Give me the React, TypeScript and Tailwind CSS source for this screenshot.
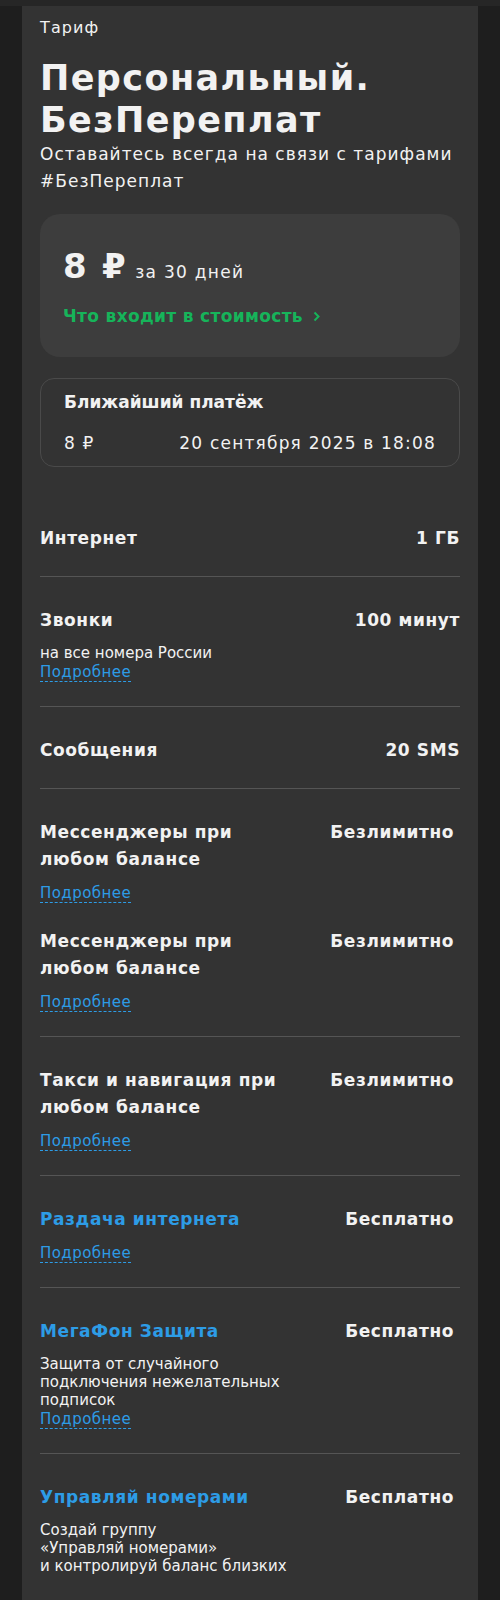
import React from 'react';

type Row = {
  title: string;
  value: string;
  blue?: boolean;
  desc?: React.ReactNode;
  more?: boolean;
  narrow?: boolean;
};

const More = () => (
  <div className="leading-[19px]">
    <span className="border-b border-dashed border-[#2d9ce6] text-[15px] tracking-[0.03em] text-[#2d9ce6]">
      Подробнее
    </span>
  </div>
);

const rows: Row[][] = [
  [{ title: 'Интернет', value: '1 ГБ' }],
  [{ title: 'Звонки', value: '100 минут', desc: 'на все номера России', more: true }],
  [{ title: 'Сообщения', value: '20 SMS' }],
  [
    { title: 'Мессенджеры при любом балансе', value: 'Безлимитно', more: true, narrow: true },
    { title: 'Мессенджеры при любом балансе', value: 'Безлимитно', more: true, narrow: true },
  ],
  [{ title: 'Такси и навигация при любом балансе', value: 'Безлимитно', more: true, narrow: true }],
  [{ title: 'Раздача интернета', value: 'Бесплатно', blue: true, more: true, narrow: true }],
  [
    {
      title: 'МегаФон Защита',
      value: 'Бесплатно',
      blue: true,
      narrow: true,
      more: true,
      desc: (
        <>
          Защита от случайного
          <br />
          подключения нежелательных
          <br />
          подписок
        </>
      ),
    },
  ],
  [
    {
      title: 'Управляй номерами',
      value: 'Бесплатно',
      blue: true,
      narrow: true,
      desc: (
        <>
          Создай группу
          <br />
          «Управляй номерами»
          <br />
          и контролируй баланс близких
        </>
      ),
    },
  ],
];

const Item = ({ row }: { row: Row }) => (
  <div>
    <div className="flex items-start justify-between text-[17px] font-bold leading-[27px] tracking-[0.035em]">
      <div className={`w-[250px] ${row.blue ? 'text-[#2d9ce6]' : 'text-[#f2f2f2]'}`}>{row.title}</div>
      <div className={row.narrow ? 'pr-[6px]' : ''}>{row.value}</div>
    </div>
    {row.desc && <div className="mt-[10px] text-[15px] leading-[18px]">{row.desc}</div>}
    {row.more && (
      <div className={row.desc ? '' : 'mt-[10px]'}>
        <More />
      </div>
    )}
  </div>
);

export default function App() {
  return (
    <div className="min-h-[1600px] w-full bg-[#1e1e1e] font-['DejaVu_Sans',sans-serif] text-[#f2f2f2]">
      <div className="h-[6px] bg-[#262626]" />
      <div className="mx-[22px] min-h-[1594px] bg-[#333333] px-[18px] pt-[10px]">
        <div className="text-[16px] leading-[24px] tracking-[0.07em]">Тариф</div>
        <h1 className="mt-[17px] text-[35px] font-bold leading-[42px] tracking-[0.04em]">
          Персональный.
          <br />
          БезПереплат
        </h1>
        <p className="text-[17px] leading-[27px] tracking-[0.06em]">
          Оставайтесь всегда на связи с тарифами
          <br />
          #БезПереплат
        </p>

        <div className="mt-[19px] rounded-[20px] bg-[#3d3d3d] px-[23px] pb-[29px] pt-[32px]">
          <div className="flex items-baseline gap-[8px]">
            <span className="text-[34px] font-bold leading-[40px] tracking-[0.05em]">8 ₽</span>
            <span className="text-[17px] tracking-[0.075em]">за 30 дней</span>
          </div>
          <div className="mt-[18px] flex items-center gap-[10px] text-[17px] font-bold leading-[24px] tracking-[0.02em] text-[#16b45a]">
            Что входит в стоимость
            <svg width="8" height="11" viewBox="0 0 8 11" fill="none">
              <path d="M1.5 1.5l4 4-4 4" stroke="#16b45a" strokeWidth="2" />
            </svg>
          </div>
        </div>

        <div className="mt-[21px] rounded-[14px] border border-[#4a4a4a] px-[23px] pb-[11px] pt-[11px]">
          <div className="text-[17px] font-bold leading-[24px]">Ближайший платёж</div>
          <div className="mt-[17px] flex justify-between text-[17px] leading-[24px] tracking-[0.07em]">
            <span>8 ₽</span>
            <span>20 сентября 2025 в 18:08</span>
          </div>
        </div>

        <div className="mt-[28px]">
          {rows.map((group, i) => (
            <div
              key={i}
              className={`flex flex-col gap-[25px] pb-[24px] pt-[30px] ${i < rows.length - 1 ? 'border-b border-[#555555]' : ''}`}
            >
              {group.map((row, j) => (
                <Item key={j} row={row} />
              ))}
            </div>
          ))}
        </div>
      </div>
    </div>
  );
}
